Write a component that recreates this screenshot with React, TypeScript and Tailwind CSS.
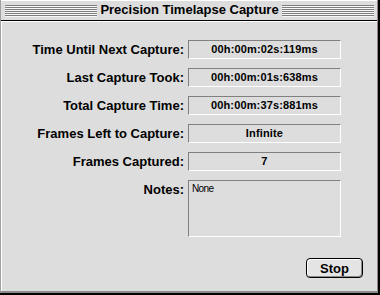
const rows: [string, string][] = [
  ['Time Until Next Capture:', '00h:00m:02s:119ms'],
  ['Last Capture Took:', '00h:00m:01s:638ms'],
  ['Total Capture Time:', '00h:00m:37s:881ms'],
  ['Frames Left to Capture:', 'Infinite'],
  ['Frames Captured:', '7'],
];

// classic title bar pinstripes
const Stripes = () => (
  <div className="flex-1 h-[12px] mt-[4px] bg-[repeating-linear-gradient(to_bottom,#7f7f7f_0px,#7f7f7f_1px,#f7f7f7_1px,#f7f7f7_2px)]" />
);

export default function App() {
  return (
    <div className="w-[380px] h-[295px] bg-[#dddddd] border-r-2 border-b-2 border-black text-black font-['Liberation_Sans',Arial,sans-serif]">
      <div className="h-full flex flex-col border-l border-l-[#a0a0a0] border-r border-r-[#8a8a8a] border-b-2 border-b-[#8a8a8a]">
        {/* Title bar */}
        <div className="h-[21px] shrink-0 flex items-start gap-[3px] pl-[4px] pr-[3px] border-t border-t-white border-b border-b-black">
          <Stripes />
          <div className="mt-[1px] text-[13px] leading-[15px] font-bold whitespace-nowrap">
            Precision Timelapse Capture
          </div>
          <Stripes />
        </div>

        {/* Content */}
        <div className="flex-1 flex flex-col border-t border-t-white border-l border-l-white pt-[18px]">
          <div className="flex flex-col gap-[9px]">
            {rows.map(([label, value]) => (
              <div key={label} className="flex items-center">
                <div className="w-[182px] text-right text-[13px] leading-[15px] font-bold whitespace-nowrap">
                  {label}
                </div>
                <div className="ml-[4px] w-[153px] h-[19px] flex items-center justify-center border border-t-[#808080] border-l-[#808080] border-b-white border-r-white text-[11px] font-bold tracking-[0.15px]">
                  {value}
                </div>
              </div>
            ))}
            <div className="flex items-start">
              <div className="w-[182px] mt-[2px] text-right text-[13px] leading-[15px] font-bold">
                Notes:
              </div>
              <div className="ml-[4px] w-[153px] h-[57px] border border-t-[#808080] border-l-[#808080] border-b-white border-r-white pl-[3px] pt-[2px] text-[10px] leading-[12px] tracking-[-0.6px]">
                None
              </div>
            </div>
          </div>

          <div className="mt-[21px] flex justify-end pr-[14px]">
            <button className="w-[57px] h-[20px] rounded-[4px] border border-black bg-[#e4e4e4] shadow-[inset_1px_1px_0_#ffffff,inset_-1px_-1px_0_#8a8a8a] text-[13px] leading-[15px] font-bold">
              Stop
            </button>
          </div>
        </div>
      </div>
    </div>
  );
}
